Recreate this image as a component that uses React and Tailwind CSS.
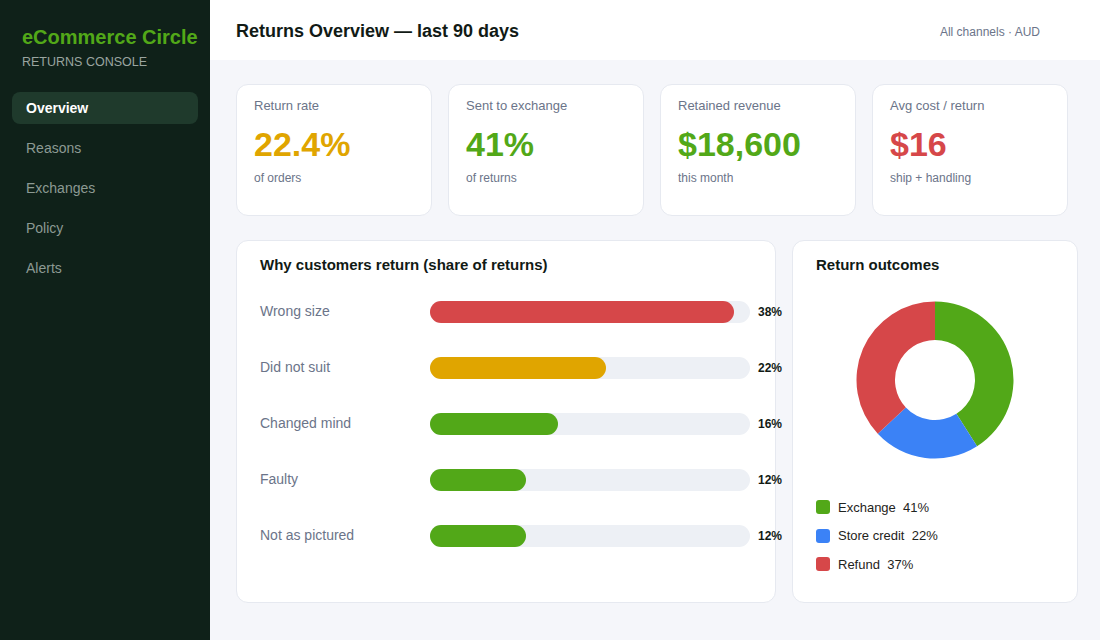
const nav = ["Overview", "Reasons", "Exchanges", "Policy", "Alerts"];

const stats = [
  { label: "Return rate", value: "22.4%", note: "of orders", color: "text-[#e0a500]" },
  { label: "Sent to exchange", value: "41%", note: "of returns", color: "text-[#52a818]" },
  { label: "Retained revenue", value: "$18,600", note: "this month", color: "text-[#52a818]" },
  { label: "Avg cost / return", value: "$16", note: "ship + handling", color: "text-[#d64749]" },
];

const reasons = [
  { label: "Wrong size", pct: 38, color: "bg-[#d64749]" },
  { label: "Did not suit", pct: 22, color: "bg-[#e0a500]" },
  { label: "Changed mind", pct: 16, color: "bg-[#52a818]" },
  { label: "Faulty", pct: 12, color: "bg-[#52a818]" },
  { label: "Not as pictured", pct: 12, color: "bg-[#52a818]" },
];

const outcomes = [
  { label: "Exchange", pct: 41, fill: "#52a818", swatch: "bg-[#52a818]" },
  { label: "Store credit", pct: 22, fill: "#3b82f6", swatch: "bg-[#3b82f6]" },
  { label: "Refund", pct: 37, fill: "#d64749", swatch: "bg-[#d64749]" },
];

// ring segment from a0 to a1 (fractions of a turn, 0 = top)
function arc(a0, a1, ro, ri) {
  const pt = (a, r) => {
    const t = a * Math.PI * 2 - Math.PI / 2;
    return [r * Math.cos(t), r * Math.sin(t)];
  };
  const big = a1 - a0 > 0.5 ? 1 : 0;
  const [x0, y0] = pt(a0, ro);
  const [x1, y1] = pt(a1, ro);
  const [x2, y2] = pt(a1, ri);
  const [x3, y3] = pt(a0, ri);
  return `M${x0} ${y0} A${ro} ${ro} 0 ${big} 1 ${x1} ${y1} L${x2} ${y2} A${ri} ${ri} 0 ${big} 0 ${x3} ${y3} Z`;
}

const Donut = () => {
  let acc = 0;
  return (
    <svg width="160" height="160" viewBox="-80 -80 160 160">
      {outcomes.map((o) => {
        const a0 = acc;
        acc += o.pct / 100;
        return <path key={o.label} d={arc(a0, acc, 78.5, 40)} fill={o.fill} />;
      })}
    </svg>
  );
};

export default function App() {
  return (
    <div className="flex h-[640px] w-[1100px] font-['Liberation_Sans',Arial,sans-serif] bg-[#f5f6fa]">
      {/* Sidebar */}
      <aside className="w-[210px] shrink-0 bg-[#0f2119] px-3 pt-[25px]">
        <div className="px-[10px]">
          <div className="whitespace-nowrap text-[20px] font-bold leading-6 text-[#52a818]">eCommerce Circle</div>
          <div className="mt-[5px] text-[12.5px] leading-4 text-[#9aa5a0]">RETURNS CONSOLE</div>
        </div>
        <nav className="mt-[22px] flex flex-col gap-2">
          {nav.map((n, i) => (
            <div
              key={n}
              className={
                i === 0
                  ? "h-8 rounded-lg bg-[#1f3a2c] px-[14px] text-[14px] font-bold leading-8 text-white"
                  : "h-8 px-[14px] text-[14px] leading-8 text-[#8c9a93]"
              }
            >
              {n}
            </div>
          ))}
        </nav>
      </aside>

      {/* Main */}
      <main className="flex-1">
        <header className="flex h-[60px] items-center justify-between bg-white pl-[26px] pr-[64px] pt-[3px]">
          <h1 className="text-[18px] font-bold text-[#111a15]">Returns Overview — last 90 days</h1>
          <span className="text-[12px] text-[#6b7489]">All channels · AUD</span>
        </header>

        <div className="px-[26px] pt-6">
          <div className="grid w-[832px] grid-cols-4 gap-4">
            {stats.map((s) => (
              <div key={s.label} className="h-[132px] rounded-xl border border-[#e6e9f0] bg-white px-[17px] pt-[11px]">
                <div className="text-[13px] text-[#6b7489]">{s.label}</div>
                <div className={`mt-[10px] text-[34px] font-bold leading-9 ${s.color}`}>{s.value}</div>
                <div className="mt-[7px] text-[12px] text-[#6b7489]">{s.note}</div>
              </div>
            ))}
          </div>

          <div className="mt-[24px] flex gap-4">
            {/* Reasons */}
            <section className="h-[363px] w-[540px] rounded-xl border border-[#e6e9f0] bg-white pl-[23px] pr-6 pt-[13px]">
              <h2 className="text-[15px] font-bold text-[#111a15]">Why customers return (share of returns)</h2>
              <div className="mt-[24px] flex flex-col gap-[34px]">
                {reasons.map((r) => (
                  <div key={r.label} className="flex h-[22px] items-center">
                    <div className="w-[170px] shrink-0 text-[14px] text-[#6b7489]">{r.label}</div>
                    <div className="h-[22px] w-[320px] shrink-0 rounded-full bg-[#edf0f5]">
                      <div
                        className={`h-full rounded-full ${r.color}`}
                        style={{ width: `${(r.pct / 40) * 100}%` }}
                      />
                    </div>
                    <div className="ml-2 text-[12px] font-bold text-[#111a15]">{r.pct}%</div>
                  </div>
                ))}
              </div>
            </section>

            {/* Outcomes */}
            <section className="h-[363px] w-[286px] rounded-xl border border-[#e6e9f0] bg-white px-[23px] pt-[13px]">
              <h2 className="text-[15px] font-bold text-[#111a15]">Return outcomes</h2>
              <div className="mt-[23px] flex justify-center">
                <Donut />
              </div>
              <div className="mt-[38px] flex flex-col gap-[9px]">
                {outcomes.map((o) => (
                  <div key={o.label} className="flex items-center gap-2 text-[13px] text-[#1f2421]">
                    <span className={`h-[14px] w-[14px] rounded-[3px] ${o.swatch}`} />
                    <span>
                      {o.label}&nbsp;&nbsp;{o.pct}%
                    </span>
                  </div>
                ))}
              </div>
            </section>
          </div>
        </div>
      </main>
    </div>
  );
}
